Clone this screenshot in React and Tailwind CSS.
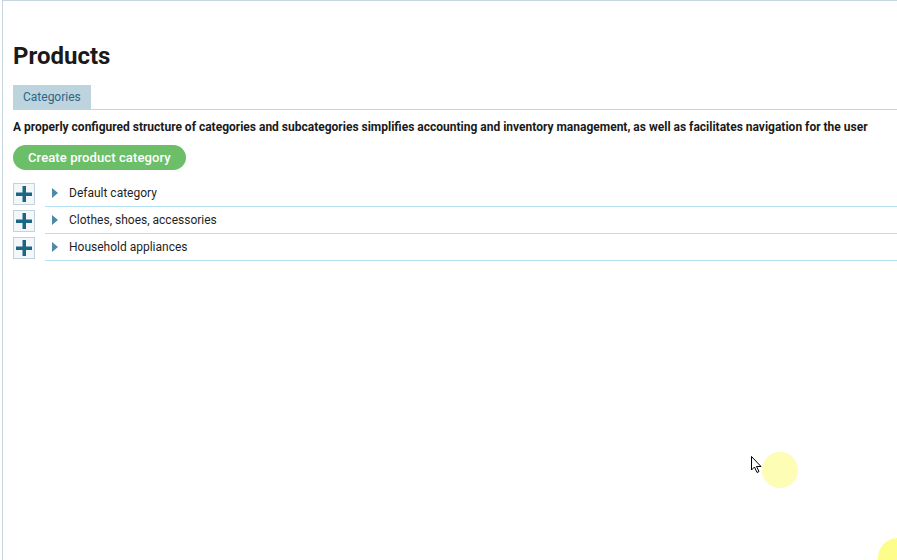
const categories = ["Default category", "Clothes, shoes, accessories", "Household appliances"];

const CategoryRow = ({ name }) => (
  <div className="flex items-center h-[27px]">
    <button className="w-[22px] h-[22px] flex items-center justify-center border border-[#c3d3dc] bg-[#f3f7f9] shrink-0">
      <svg width="18" height="18" viewBox="0 0 18 18">
        <rect x="7.5" y="1" width="3.5" height="16" fill="#1b6685" />
        <rect x="1" y="7.5" width="16" height="3.5" fill="#1b6685" />
      </svg>
    </button>
    <div className="ml-[10px] flex-1 flex items-center h-full border-b border-[#b5e3f3] pl-[6px]">
      <svg width="8" height="10" viewBox="0 0 8 10" className="mr-[10px]">
        <path d="M1 0 L7 5 L1 10 Z" fill="#4e8aa8" />
      </svg>
      <span className="text-[12px] text-[#1f1f1f]">{name}</span>
    </div>
  </div>
);

export default function App() {
  return (
    <div
      className="relative w-[897px] h-[560px] overflow-hidden bg-white"
      style={{ fontFamily: "Roboto, 'Liberation Sans', sans-serif" }}
    >
      <div className="h-full ml-[2px] border-l border-t border-[#c5d6e0] pl-[10px] pt-[40px]">
        <h1 className="text-[24px] font-bold text-[#1a1a1a] leading-[30px]">Products</h1>
        <div className="mt-[14px] border-b border-[#c7d4dc] flex">
          <div className="bg-[#bdd3dd] text-[#2b6788] text-[12px] h-[24px] px-[10px] flex items-center">
            Categories
          </div>
        </div>
        <p className="mt-[9px] text-[12px] font-bold text-[#1a1a1a] leading-[16px]">
          A properly configured structure of categories and subcategories simplifies accounting and inventory management, as well as facilitates navigation for the user
        </p>
        <button className="mt-[10px] h-[25px] px-[15px] rounded-full bg-[#6dbe69] text-white text-[13px] font-medium tracking-[0.1px]">
          Create product category
        </button>
        <div className="mt-[10px] flex flex-col">
          {categories.map((c) => (
            <CategoryRow key={c} name={c} />
          ))}
        </div>
      </div>

      <div className="absolute left-[762px] top-[452px] w-[36px] h-[36px] rounded-full bg-[#fdfdb6]" />
      <div className="absolute left-[878px] top-[538px] w-[40px] h-[40px] rounded-full bg-[#fdfd8c]" />
      <svg className="absolute left-[751px] top-[456px]" width="12" height="18" viewBox="0 0 12 18">
        <path d="M0.5 0.5 L0.5 14 L3.5 11 L6 16.5 L8 15.5 L5.5 10.5 L10 10.5 Z" fill="white" stroke="black" strokeWidth="1" />
      </svg>
    </div>
  );
}
